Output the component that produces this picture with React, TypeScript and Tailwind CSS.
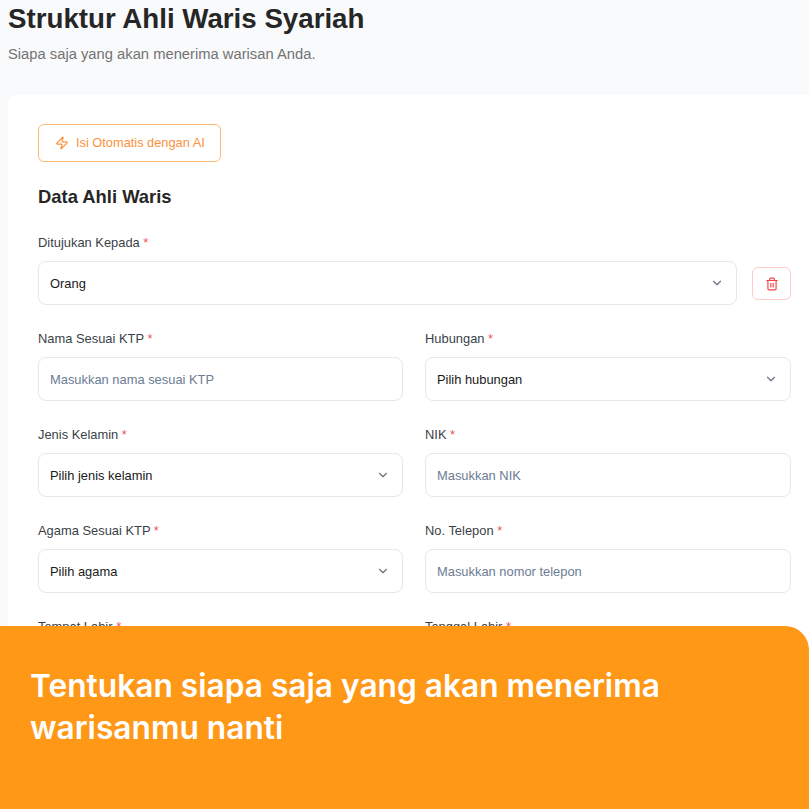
import { ChevronDown, Trash2, Zap } from 'lucide-react'

function Label({ text }: { text: string }) {
  return (
    <label className="block h-[18px] mb-[10px] pt-px text-[12.9px] leading-[18px] text-[#3a3f47]">
      {text} <span className="text-[#f05252]">*</span>
    </label>
  )
}

function SelectBox({ value }: { value: string }) {
  return (
    <div className="flex h-11 items-center justify-between rounded-lg border border-[#e5e7eb] bg-white pl-[11px] pr-[12px]">
      <span className="pt-px text-[12.9px] text-[#1a1a1a]">{value}</span>
      <ChevronDown size={14} className="text-[#6b7280]" />
    </div>
  )
}

function InputBox({ placeholder }: { placeholder: string }) {
  return (
    <div className="flex h-11 items-center rounded-lg border border-[#e5e7eb] bg-white px-[11px]">
      <span className="pt-px text-[12.9px] text-[#6b7c93]">{placeholder}</span>
    </div>
  )
}

function Field({ label, children }: { label: string; children: React.ReactNode }) {
  return (
    <div>
      <Label text={label} />
      {children}
    </div>
  )
}

export default function App() {
  return (
    <div className="relative h-[809px] w-[809px] overflow-hidden bg-[#f9fafb] font-['Liberation_Sans',sans-serif]">
      <div className="w-[840px] pl-2">
        <h1 className="h-[38px] text-[27.7px] font-bold leading-[38px] text-[#262626]">Struktur Ahli Waris Syariah</h1>
        <p className="mt-[7px] text-[14.75px] leading-[18px] text-[#737373]">Siapa saja yang akan menerima warisan Anda.</p>

        <div className="mt-[32px] w-[813px] rounded-lg bg-white pl-[30px] pr-[30px] pt-[29px]">
          <button className="flex h-[38px] w-[183px] items-center gap-[7px] rounded-md border border-[#fdba74] bg-white pl-[16px] text-[12.8px] text-[#fb923c]">
            <Zap size={14} />
            Isi Otomatis dengan AI
          </button>
          <h2 className="mt-[23px] h-[24px] text-[18.4px] font-bold leading-[24px] text-[#262626]">Data Ahli Waris</h2>

          <div className="mt-[24px]">
            <Label text="Ditujukan Kepada" />
            <div className="flex items-center gap-[15px]">
              <div className="w-[699px]">
                <SelectBox value="Orang" />
              </div>
              <button className="mt-px flex h-[33px] w-[39px] items-center justify-center rounded-md border border-[#fecaca] bg-white">
                <Trash2 size={14} className="text-[#ef4444]" />
              </button>
            </div>
          </div>

          <div className="mt-[24px] grid w-[753px] grid-cols-[365px_366px] gap-x-[22px] gap-y-[24px]">
            <Field label="Nama Sesuai KTP"><InputBox placeholder="Masukkan nama sesuai KTP" /></Field>
            <Field label="Hubungan"><SelectBox value="Pilih hubungan" /></Field>
            <Field label="Jenis Kelamin"><SelectBox value="Pilih jenis kelamin" /></Field>
            <Field label="NIK"><InputBox placeholder="Masukkan NIK" /></Field>
            <Field label="Agama Sesuai KTP"><SelectBox value="Pilih agama" /></Field>
            <Field label="No. Telepon"><InputBox placeholder="Masukkan nomor telepon" /></Field>
            <Field label="Tempat Lahir"><InputBox placeholder="Masukkan tempat lahir" /></Field>
            <Field label="Tanggal Lahir"><InputBox placeholder="dd/mm/yyyy" /></Field>
          </div>
        </div>
      </div>

      {/* Caption banner over the page */}
      <div className="absolute bottom-0 left-0 right-0 h-[183px] rounded-tr-[24px] bg-[#ff9717] pl-[30px] pt-[39px]">
        <p className="w-[700px] font-['Inter',sans-serif] text-[31.7px] font-semibold leading-[42px] text-white">
          Tentukan siapa saja yang akan menerima warisanmu nanti
        </p>
      </div>
    </div>
  )
}
